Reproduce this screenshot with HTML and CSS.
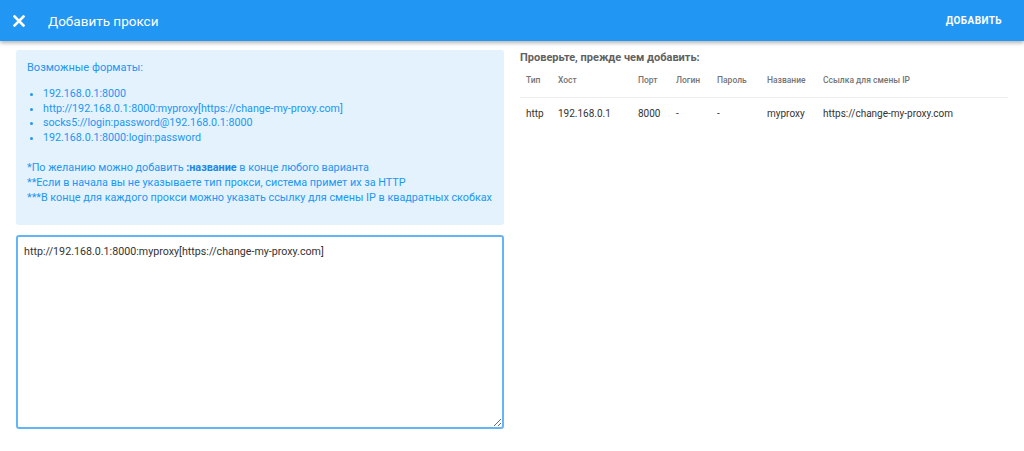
FILE: index.html
```html
<!DOCTYPE html>
<html lang="ru">
<head>
<meta charset="utf-8">
<title>Добавить прокси</title>
<link rel="stylesheet" href="styles.css">
</head>
<body>
<header class="topbar">
  <button class="close" aria-label="close">
    <svg width="12" height="12" viewBox="0 0 12 12"><path d="M1.5 1.5 L10.5 10.5 M10.5 1.5 L1.5 10.5" stroke="#fff" stroke-width="2.6" stroke-linecap="square"/></svg>
  </button>
  <h1 class="title">Добавить прокси</h1>
  <button class="add">ДОБАВИТЬ</button>
</header>
<main class="content">
  <section class="left">
    <div class="info">
      <p class="info-title">Возможные форматы:</p>
      <ul class="formats">
        <li>192.168.0.1:8000</li>
        <li>http://192.168.0.1:8000:myproxy[https://change-my-proxy.com]</li>
        <li>socks5://login:password@192.168.0.1:8000</li>
        <li>192.168.0.1:8000:login:password</li>
      </ul>
      <p class="notes">*По желанию можно добавить <b>:название</b> в конце любого варианта<br>**Если в начала вы не указываете тип прокси, система примет их за HTTP<br>***В конце для каждого прокси можно указать ссылку для смены IP в квадратных скобках</p>
    </div>
    <textarea class="input">http://192.168.0.1:8000:myproxy[https://change-my-proxy.com]</textarea>
  </section>
  <section class="right">
    <h2 class="check">Проверьте, прежде чем добавить:</h2>
    <table class="preview">
      <thead>
        <tr><th class="c1">Тип</th><th class="c2">Хост</th><th class="c3">Порт</th><th class="c4">Логин</th><th class="c5">Пароль</th><th class="c6">Название</th><th>Ссылка для смены IP</th></tr>
      </thead>
      <tbody>
        <tr><td>http</td><td>192.168.0.1</td><td>8000</td><td>-</td><td>-</td><td>myproxy</td><td>https://change-my-proxy.com</td></tr>
      </tbody>
    </table>
  </section>
</main>
</body>
</html>
```
FILE: styles.css
```css
* { box-sizing: border-box; }
html, body { margin: 0; padding: 0; background: #fff; }
body { font-family: Roboto, "Noto Sans", sans-serif; color: #333; }

.topbar {
  height: 41px;
  background: #2196F3;
  display: flex;
  align-items: center;
  padding: 0 22px 0 13px;
  box-shadow: 0 2px 4px rgba(0,0,0,0.3);
  position: relative;
}
.close {
  background: none; border: 0; padding: 0; margin: 0;
  width: 12px; height: 12px; display: flex;
  margin-top: 1px;
}
.title {
  margin: 0 0 0 23px;
  font-size: 13.5px;
  font-weight: 400;
  color: #fff;
  flex: 1;
}
.add {
  background: none; border: 0; padding: 0;
  color: #fff;
  font-family: Roboto, sans-serif;
  font-size: 10px;
  font-weight: 700;
  letter-spacing: 0.4px;
}

.content {
  display: grid;
  grid-template-columns: 488px 488px;
  gap: 16px;
  padding: 9px 16px 0 16px;
}
.left { display: flex; flex-direction: column; gap: 10px; }
.info {
  background: #E3F2FD;
  border-radius: 3px;
  color: #2196F3;
  font-size: 11px;
  line-height: 15px;
  padding: 10px 2px 0 11px;
  height: 175px;
}
.info p { margin: 0; }
.info .info-title { margin-bottom: 12px; }
.info .formats { margin: 0; padding: 0 0 0 16px; line-height: 14.7px; font-size: 10.7px; }
.info .notes { margin-top: 14px; white-space: nowrap; font-size: 10.8px; }
.notes b { font-weight: 700; color: #1E88E5; }

.input {
  display: block;
  width: 488px;
  height: 194px;
  border: 2px solid #64B5F6;
  border-radius: 3px;
  padding: 8px 6px;
  font-family: Roboto, sans-serif;
  font-size: 10.7px;
  line-height: 14px;
  color: #333;
  resize: vertical;
  outline: none;
}

.check {
  margin: 0;
  font-size: 11px;
  font-weight: 700;
  color: #616161;
  line-height: 15px;
}
.preview {
  width: 488px;
  border-collapse: collapse;
  margin-top: 7px;
}
.preview th {
  font-size: 8.5px;
  font-weight: 500;
  color: #757575;
  text-align: left;
  padding: 3px 0 12px 6px;
  border-bottom: 1px solid #eee;
  white-space: nowrap;
}
.preview td {
  font-size: 10px;
  color: #333;
  padding: 10px 0 0 6px;
  text-align: left;
  white-space: nowrap;
}
.c1 { width: 32px; }
.c2 { width: 80px; }
.c3 { width: 38px; }
.c4 { width: 41px; }
.c5 { width: 50px; }
.c6 { width: 56px; }
```
